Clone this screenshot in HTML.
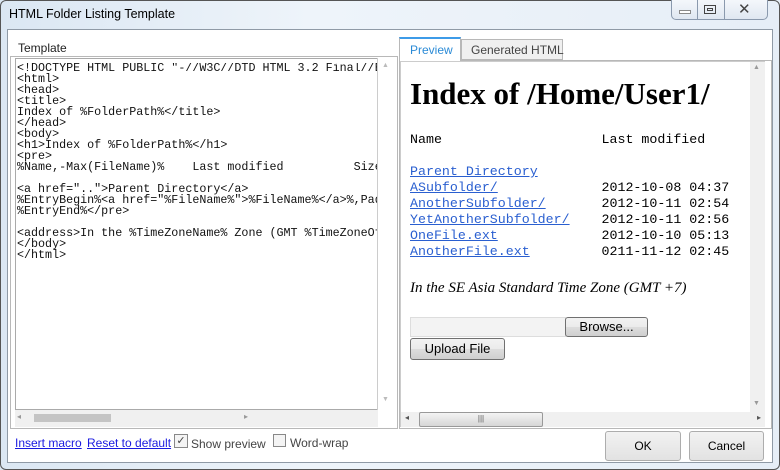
<!DOCTYPE html>
<html><head><style>
*{margin:0;padding:0;box-sizing:border-box}
body{width:780px;height:470px;position:relative;overflow:hidden;background:linear-gradient(90deg,#dbe7f3,#eef4fa 40%,#e6eef7);font-family:"Liberation Sans",sans-serif;font-size:12px;color:#222}
.a{position:absolute}
.mono{font-family:"Liberation Mono",monospace}
.btn{position:absolute;border:1px solid #707070;border-radius:3px;background:linear-gradient(#f2f2f2,#ebebeb 50%,#dddddd 51%,#cfcfcf);text-align:center;color:#000}
a{color:#1a1ae0;text-decoration:underline}
.lnk{color:#2a5fd0;text-decoration:underline}
</style></head><body>
<div class="a" style="left:0;top:0;width:780px;height:470px;border:1px solid #555;border-radius:6px"></div>
<div class="a" style="left:9px;top:7px;font-size:12.5px;color:#000">HTML Folder Listing Template</div>
<div class="a" style="left:671px;top:0;width:97px;height:20px;border:1px solid #8a99ad;border-top:none;border-radius:0 0 5px 5px;background:linear-gradient(#f4f7fb,#dfe7f1)"></div>
<div class="a" style="left:697px;top:0;width:1px;height:20px;background:#8a99ad"></div>
<div class="a" style="left:724px;top:0;width:1px;height:20px;background:#8a99ad"></div>
<div class="a" style="left:679px;top:10px;width:12px;height:4px;border:1px solid #8a8a8a;background:#fff"></div>
<div class="a" style="left:704px;top:5px;width:12px;height:9px;border:1px solid #444;"></div>
<div class="a" style="left:707px;top:8px;width:6px;height:3px;border:1px solid #444"></div>
<div class="a" style="left:738px;top:0px;font-size:15px;color:#444">✕</div>
<!-- client -->
<div class="a" style="left:7px;top:29px;width:766px;height:434px;background:#fff;border:1px solid #8f9aa6"></div>
<div class="a" style="left:18px;top:41px;color:#222">Template</div>
<div class="a" style="left:10px;top:56px;width:388px;height:373px;border:1px solid #b8b8b8"></div>
<div class="a" style="left:15px;top:58px;width:363px;height:352px;border:1px solid #aaa;background:#fff;overflow:hidden"></div>
<pre class="a mono" style="left:17px;top:63px;width:360px;overflow:hidden;font-size:11.7px;line-height:11px;color:#111">&lt;!DOCTYPE HTML PUBLIC "-//W3C//DTD HTML 3.2 Final//EN"&gt;
&lt;html&gt;
&lt;head&gt;
&lt;title&gt;
Index of %FolderPath%&lt;/title&gt;
&lt;/head&gt;
&lt;body&gt;
&lt;h1&gt;Index of %FolderPath%&lt;/h1&gt;
&lt;pre&gt;
%Name,-Max(FileName)%    Last modified          Size
 
&lt;a href=".."&gt;Parent Directory&lt;/a&gt;
%EntryBegin%&lt;a href="%FileName%"&gt;%FileName%&lt;/a&gt;%,Pad
%EntryEnd%&lt;/pre&gt;
 
&lt;address&gt;In the %TimeZoneName% Zone (GMT %TimeZoneOff
&lt;/body&gt;
&lt;/html&gt;</pre>
<div class="a" style="left:377px;top:58px;width:19px;height:352px;background:#fff;border-left:1px solid #ccc"></div>
<div class="a" style="left:382px;top:62px;font-size:7px;color:#bbb">▲</div>
<div class="a" style="left:382px;top:396px;font-size:7px;color:#bbb">▼</div>
<div class="a" style="left:15px;top:410px;width:363px;height:17px;background:#f0f0f0"></div>
<div class="a" style="left:34px;top:414px;width:77px;height:8px;background:#c4c4c4"></div>
<div class="a" style="left:17px;top:412px;font-size:8px;color:#999">◂</div>
<div class="a" style="left:244px;top:412px;font-size:8px;color:#999">▸</div>
<!-- right -->
<div class="a" style="left:399px;top:60px;width:373px;height:369px;border:1px solid #b8b8b8"></div>
<div class="a" style="left:399px;top:37px;width:62px;height:24px;background:#fff;border:1px solid #b8b8b8;border-bottom:none;border-top:2px solid #3d9be8"></div>
<div class="a" style="left:410px;top:43px;color:#2a8ad6">Preview</div>
<div class="a" style="left:461px;top:39px;width:102px;height:21px;background:#f0f0f0;border:1px solid #b8b8b8"></div>
<div class="a" style="left:471px;top:43px;color:#444">Generated HTML</div>
<div class="a" style="left:400px;top:61px;width:365px;height:366px;border:1px solid #ccc;background:#fff"></div>
<div class="a" style="left:410px;top:76px;font-family:'Liberation Serif',serif;font-weight:bold;font-size:31px;color:#000">Index of /Home/User1/</div>
<pre class="a mono" style="left:410px;top:132px;font-size:13.3px;line-height:16px;color:#000">Name                    Last modified
 
<span class="lnk">Parent Directory</span>
<span class="lnk">ASubfolder/</span>             2012-10-08 04:37
<span class="lnk">AnotherSubfolder/</span>       2012-10-11 02:54
<span class="lnk">YetAnotherSubfolder/</span>    2012-10-11 02:56
<span class="lnk">OneFile.ext</span>             2012-10-10 05:13
<span class="lnk">AnotherFile.ext</span>         0211-11-12 02:45</pre>
<div class="a" style="left:410px;top:280px;font-family:'Liberation Serif',serif;font-style:italic;font-size:15px;color:#000">In the SE Asia Standard Time Zone (GMT +7)</div>
<div class="a" style="left:410px;top:317px;width:156px;height:20px;background:#f3f3f3;border:1px solid #ddd"></div>
<div class="btn" style="left:565px;top:317px;width:83px;height:20px;font-size:13px;line-height:18px">Browse...</div>
<div class="btn" style="left:410px;top:338px;width:95px;height:22px;font-size:13px;line-height:20px">Upload File</div>
<div class="a" style="left:750px;top:62px;width:15px;height:350px;background:#f0f0f0"></div>
<div class="a" style="left:753px;top:64px;font-size:7px;color:#999">▲</div>
<div class="a" style="left:753px;top:400px;font-size:7px;color:#999">▼</div>
<div class="a" style="left:401px;top:412px;width:364px;height:15px;background:#f0f0f0"></div>
<div class="a" style="left:419px;top:412px;width:124px;height:15px;border:1px solid #999;border-radius:2px;background:linear-gradient(#f4f4f4,#d6d6d6);text-align:center;font-size:8px;line-height:12px;color:#555">|||</div>
<div class="a" style="left:405px;top:413px;font-size:8px;color:#555">◂</div>
<div class="a" style="left:757px;top:413px;font-size:8px;color:#555">▸</div>
<!-- bottom -->
<div class="a" style="left:15px;top:436px"><a>Insert macro</a></div>
<div class="a" style="left:87px;top:436px"><a>Reset to default</a></div>
<div class="a" style="left:174px;top:434px;width:14px;height:14px;border:1px solid #888;background:#f4f4f4;font-size:11px;line-height:12px;text-align:center;color:#444">✓</div>
<div class="a" style="left:191px;top:437px;color:#444">Show preview</div>
<div class="a" style="left:273px;top:434px;width:13px;height:13px;border:1px solid #888;background:#f4f4f4"></div>
<div class="a" style="left:290px;top:436px;color:#444">Word-wrap</div>
<div class="btn" style="left:605px;top:431px;width:76px;height:30px;line-height:28px;border-color:#adadad;background:linear-gradient(#f2f2f2,#e2e2e2)">OK</div>
<div class="btn" style="left:689px;top:431px;width:75px;height:30px;line-height:28px;border-color:#adadad;background:linear-gradient(#f2f2f2,#e2e2e2)">Cancel</div>
</body></html>
